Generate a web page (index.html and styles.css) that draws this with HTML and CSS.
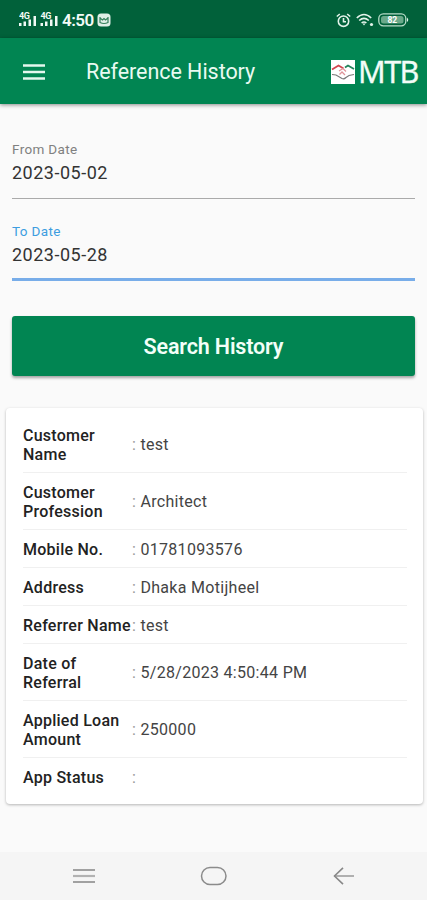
FILE: index.html
```html
<!DOCTYPE html>
<html lang="en">
<head>
<meta charset="utf-8">
<meta name="viewport" content="width=device-width, initial-scale=1">
<title>Reference History</title>
<link rel="stylesheet" href="styles.css">
</head>
<body>
<div class="screen">
  <div class="status">
    <svg class="signals" width="40" height="16" viewBox="0 0 40 16">
      <g id="signal" fill="#f1faf5">
        <text class="net" x="0" y="7.5">4G</text>
        <path d="M0 12h2.500v3H0zM4.500 10.500H7V15H4.500zM9.500 8.500H12V15H9.500zM14.500 5H17v10h-2.500z"/>
      </g>
      <use href="#signal" x="21.500"/>
    </svg>
    <span class="time">4:50</span>
    <svg class="app" width="14" height="14" viewBox="0 0 14 14">
      <rect x=".5" y=".5" width="13" height="13" rx="3.500" fill="#dfeee6"/>
      <path d="M3 5l2.500 2L7 5.500 8.500 7 11 5M3 4v5.500q4 2 8 0V4" fill="none" stroke="#357f5b" stroke-width="1.200"/>
    </svg>
    <div class="status-right">
      <svg width="15" height="15" viewBox="0 0 15 15" fill="none" stroke="#e3f3ea" stroke-width="1.600">
        <circle cx="7.500" cy="8.200" r="5.200"/><path d="M.8 3.500 3.800 1M14.200 3.500 11.200 1M7.500 5v3.700H10"/>
      </svg>
      <svg class="wifi" width="18" height="14" viewBox="0 0 18 14" fill="none" stroke="#e3f3ea" stroke-width="1.600">
        <path d="M.8 5Q8 -2 15.200 5M3.200 7.500q4.800-4.300 9.600 0M5.600 10q2.400-2 4.800 0"/><path d="M6.500 10.500h3L8 12.500z" fill="#e3f3ea" stroke="none"/><circle cx="15.500" cy="11.500" r="1.600" fill="#e3f3ea" stroke="none"/>
      </svg>
      <svg class="battery" width="32" height="14" viewBox="0 0 32 14">
        <rect x=".8" y=".8" width="27" height="12" rx="4.500" fill="none" stroke="#b7dbc8" stroke-width="1.300"/>
        <rect x="3" y="3" width="22.500" height="7.600" rx="2.500" fill="#6aa98a"/>
        <path d="M29 4.500q2.500 2.300 0 4.600z" fill="#e3f3ea"/>
        <text class="charge" x="14.300" y="10" text-anchor="middle">82</text>
      </svg>
    </div>
  </div>
  <header class="appbar">
    <svg class="menu" width="22" height="16" viewBox="0 0 22 16"><path d="M0 1.500h22M0 8h22M0 14.500h22" stroke="#e4f8ee" stroke-width="2.400"/></svg>
    <h1>Reference History</h1>
    <div class="brand">
      <svg width="24" height="24" viewBox="0 0 24 24" fill="none">
        <path d="M0 0h24v24H0z" fill="#fff"/>
        <path d="M1 9.500 7.500 5.500l5 3" stroke="#d34650" stroke-width="1.800"/>
        <path d="M14 7.500 17 5.500 23 9" stroke="#23835b" stroke-width="1.800"/>
        <path d="M8 11l4-2.500 3 3M8.500 14.500l2.500-2.500 3 3" stroke="#df949a" stroke-width="1.300"/>
        <path d="M1 14.500l4 .5 6 3.500q2 1 4-1l3-2 5-1" stroke="#777" stroke-width="1.100"/>
      </svg>
      <span>MTB</span>
    </div>
  </header>
  <main>
    <div class="field"><label>From Date</label><div class="date">2023-05-02</div></div>
    <div class="field active"><label>To Date</label><div class="date">2023-05-28</div></div>
    <button class="search">Search History</button>
    <dl class="card">
      <div class="row tall"><dt>Customer Name</dt><dd><i>:</i> test</dd></div>
      <div class="row tall"><dt>Customer Profession</dt><dd><i>:</i> Architect</dd></div>
      <div class="row"><dt>Mobile No.</dt><dd><i>:</i> 01781093576</dd></div>
      <div class="row"><dt>Address</dt><dd><i>:</i> Dhaka Motijheel</dd></div>
      <div class="row"><dt>Referrer Name</dt><dd><i>:</i> test</dd></div>
      <div class="row tall"><dt>Date of Referral</dt><dd><i>:</i> 5/28/2023 4:50:44 PM</dd></div>
      <div class="row tall"><dt>Applied Loan Amount</dt><dd><i>:</i> 250000</dd></div>
      <div class="row last"><dt>App Status</dt><dd><i>:</i></dd></div>
    </dl>
  </main>
  <nav>
    <svg width="24" height="20" viewBox="0 0 24 20" fill="none"><path d="M1 4h22M1 16h22" stroke="#858585" stroke-width="1.700"/><path d="M1 10h22" stroke="#b2b2b2" stroke-width="2.200"/></svg>
    <svg width="28" height="20" viewBox="0 0 28 20" fill="none"><rect x="1.500" y="1.500" width="24.500" height="17" rx="8.500" stroke="#8b8b8b" stroke-width="1.500"/></svg>
    <svg width="24" height="20" viewBox="0 0 24 20" fill="none"><path d="M2 10h20" stroke="#b0b0b0" stroke-width="2"/><path d="M11 1.800 2.500 10l8.500 8.200" stroke="#888" stroke-width="1.600"/></svg>
  </nav>
</div>
</body>
</html>
```
FILE: styles.css
```css
* { box-sizing: border-box; }
body { margin: 0; font-family: Roboto, sans-serif; background: #fafafa; color: #333; }
.screen { height: 900px; display: flex; flex-direction: column; overflow: hidden; }
.status { height: 38px; flex: none; background: #01613a; display: flex; align-items: center; padding: 2px 17px 0 19px; }
.signals { flex: none; margin-top: -2px; }
.net { font: 700 9px Roboto, sans-serif; letter-spacing: -.3px; }
.time { font-size: 17px; font-weight: 600; color: #f3fbf7; margin-left: 3px; width: 31px; letter-spacing: -.5px; white-space: nowrap; }
.app { margin-left: 4px; }
.status-right { margin-left: auto; display: flex; align-items: center; }
.wifi { margin-left: 5px; }
.battery { margin-left: 4px; }
.charge { font: 700 8.5px Roboto, sans-serif; fill: #fff; }
.appbar { height: 66px; flex: none; background: #018552; display: flex; align-items: center; padding: 1px 8px 0 23px; box-shadow: 0 1px 4px rgba(0,0,0,.45); }
.menu { flex: none; }
h1 { margin: 0 0 0 41px; font-size: 21.5px; font-weight: 400; letter-spacing: -.05px; color: #e9faf1; white-space: nowrap; }
.brand { margin-left: auto; display: flex; align-items: center; gap: 3px; }
.brand span { font: 400 30.5px/36px "Noto Sans", sans-serif; -webkit-text-stroke: .3px #f2fcf7; color: #f2fcf7; width: 61px; letter-spacing: -1.5px; white-space: nowrap; margin-top: -2px; }
main { flex: 1; padding: 38px 12px 0; }
.field { height: 57px; border-bottom: 1px solid #aaa; margin-bottom: 25px; }
.field label { display: block; font-size: 13.5px; line-height: 15px; letter-spacing: .35px; color: #808080; }
.date { font-size: 18px; line-height: 21px; margin-top: 5px; letter-spacing: .5px; }
.active { border-bottom: 3px solid #78ade9; margin-bottom: 35px; }
.active label { color: #3d9de0; }
.search { display: block; width: 403px; height: 60px; border: 0; border-radius: 3px; background: #018552; color: #f2fff8; font: 600 21.5px Roboto, sans-serif; letter-spacing: -.15px; box-shadow: 0 2px 3px rgba(0,0,0,.35); }
.card { margin: 32px -6px 0; height: 396px; width: 417px; padding: 8px 16px 8px 17px; background: #fff; border-radius: 4px; box-shadow: 0 1px 3px rgba(0,0,0,.28); }
.row { display: flex; align-items: center; height: 38px; border-bottom: 1px solid #f0f0f0; }
.tall { height: 57px; }
.last { border: 0; height: 37px; }
dt { flex: none; width: 109px; font-size: 16px; font-weight: 500; line-height: 19px; letter-spacing: .25px; color: #222; padding-top: 1px; }
dd { margin: 0; font-size: 16px; line-height: 19px; letter-spacing: .3px; color: #444; white-space: nowrap; padding-top: 1px; }
dd i { font-style: normal; color: #999; }
nav { height: 48px; flex: none; background: #f5f5f5; display: flex; justify-content: space-between; align-items: center; padding: 0 71px 0 72px; }
```
